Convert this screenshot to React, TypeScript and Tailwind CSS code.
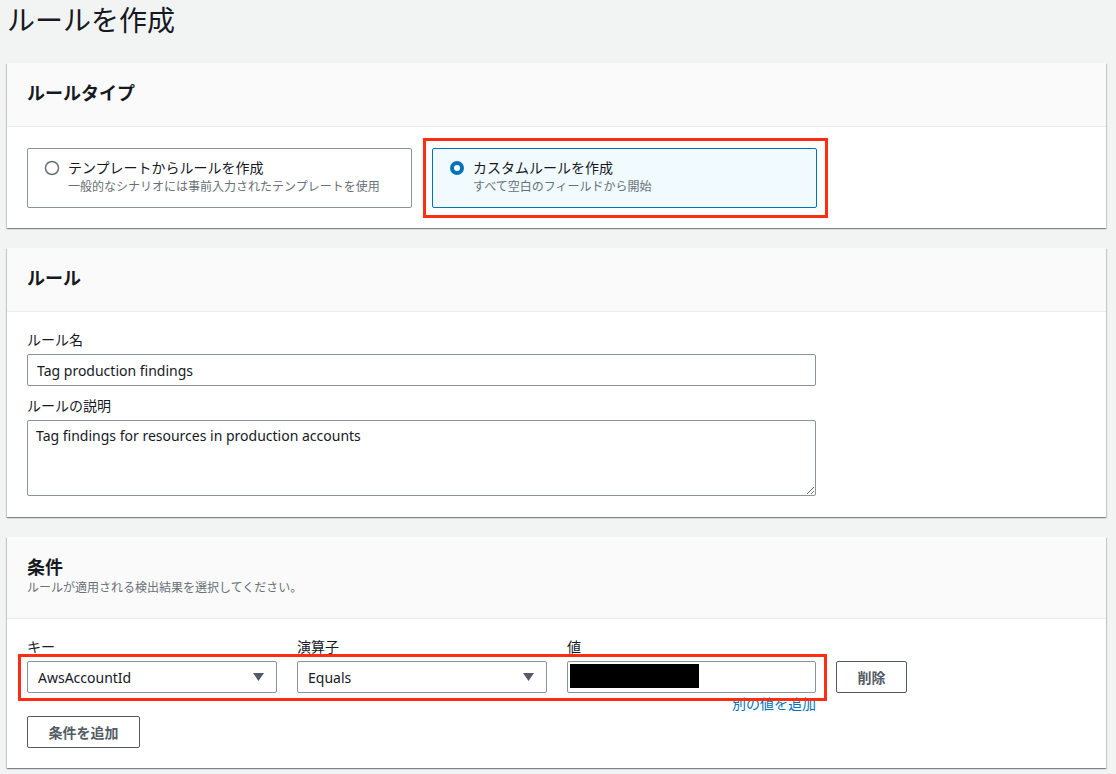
import React from 'react';

const font = "font-['Noto_Sans','Noto_Sans_CJK_JP',sans-serif]";

function Card({ children }: { children: React.ReactNode }) {
  return (
    <section className="bg-white shadow-[0_1px_1px_0_rgba(0,28,36,0.3),1px_1px_1px_0_rgba(0,28,36,0.15),-1px_1px_1px_0_rgba(0,28,36,0.15)]">
      {children}
    </section>
  );
}

function CardHeader({ title, sub }: { title: string; sub?: string }) {
  return (
    <div className="bg-[#fafafa] border-b border-[#eaeded] px-5 pt-[18px] pb-[21px]">
      <h2 className="text-[18px] leading-6 font-bold text-[#16191f]">{title}</h2>
      {sub && <p className="text-[12px] leading-[18px] text-[#687078]">{sub}</p>}
    </div>
  );
}

function Radio({ checked }: { checked?: boolean }) {
  return (
    <svg width="16" height="16" viewBox="0 0 16 16" className="shrink-0 mt-[2px]">
      {checked ? (
        <>
          <circle cx="8" cy="8" r="7" fill="#0073bb" />
          <circle cx="8" cy="8" r="3" fill="#fff" />
        </>
      ) : (
        <circle cx="8" cy="8" r="6.5" fill="#fff" stroke="#687078" strokeWidth="1.5" />
      )}
    </svg>
  );
}

function Tile({ title, desc, checked }: { title: string; desc: string; checked?: boolean }) {
  return (
    <div
      className={
        'w-[385px] h-[60px] rounded-[2px] border pl-4 pt-[9px] flex gap-2 ' +
        (checked ? 'border-[#0073bb] bg-[#f1faff]' : 'border-[#879596] bg-white')
      }
    >
      <Radio checked={checked} />
      <div>
        <div className="text-[14px] leading-5 text-[#16191f]">{title}</div>
        <div className="text-[12px] leading-[18px] text-[#687078]">{desc}</div>
      </div>
    </div>
  );
}

function Caret() {
  return (
    <svg width="11" height="8" viewBox="0 0 11 8">
      <path d="M0 0 L11 0 L5.5 8 Z" fill="#545b64" />
    </svg>
  );
}

function Select({ value }: { value: string }) {
  return (
    <div className="h-[32px] rounded-[2px] border border-[#879596] bg-white flex items-center justify-between pl-[10px] pr-[12px] text-[14px] text-[#16191f]">
      <span>{value}</span>
      <Caret />
    </div>
  );
}

function Label({ children }: { children: React.ReactNode }) {
  return <div className="text-[14px] leading-[22px] text-[#16191f] mb-[3px]">{children}</div>;
}

function Button({ children, className = '' }: { children: React.ReactNode; className?: string }) {
  return (
    <button
      className={
        'h-[32px] rounded-[2px] border border-[#545b64] bg-white text-[14px] font-bold text-[#545b64] ' + className
      }
    >
      {children}
    </button>
  );
}

export default function App() {
  return (
    <div className={`${font} min-h-screen bg-[#f2f3f3] pl-[7px] pr-[10px] pb-2`}>
      <h1 className="text-[28px] leading-[40px] text-[#16191f] mb-[23px]">ルールを作成</h1>

      <div className="flex flex-col gap-5">
        <Card>
          <CardHeader title="ルールタイプ" />
          <div className="px-5 pt-[21px] pb-5 flex gap-5">
            <Tile title="テンプレートからルールを作成" desc="一般的なシナリオには事前入力されたテンプレートを使用" />
            <div className="relative">
              <Tile title="カスタムルールを作成" desc="すべて空白のフィールドから開始" checked />
              <div className="absolute -top-[10px] -bottom-[10px] -left-[9px] -right-[11px] border-[3px] border-[#ff2e12] pointer-events-none" />
            </div>
          </div>
        </Card>

        <Card>
          <CardHeader title="ルール" />
          <div className="px-5 pt-[17px] pb-[21px] w-[829px]">
            <Label>ルール名</Label>
            <div className="h-[32px] rounded-[2px] border border-[#879596] flex items-center px-[9px] text-[14px] text-[#16191f]">
              Tag production findings
            </div>
            <div className="mt-[9px]">
              <Label>ルールの説明</Label>
            </div>
            <textarea
              readOnly
              defaultValue="Tag findings for resources in production accounts"
              className="block w-full h-[76px] mt-[2px] rounded-[2px] border border-[#879596] px-2 py-[4px] text-[14px] leading-[22px] text-[#16191f] outline-none"
            />
          </div>
        </Card>

        <Card>
          <CardHeader title="条件" sub="ルールが適用される検出結果を選択してください。" />
          <div className="px-5 pt-[17px] pb-5">
            <div className="flex gap-5 items-start">
              <div className="relative flex gap-5">
                <div className="w-[250px]">
                  <Label>キー</Label>
                  <Select value="AwsAccountId" />
                </div>
                <div className="w-[250px]">
                  <Label>演算子</Label>
                  <Select value="Equals" />
                </div>
                <div className="w-[249px]">
                  <Label>値</Label>
                  <div className="h-[32px] rounded-[2px] border border-[#879596] bg-white p-[2px]">
                    <div className="w-[129px] h-[24px] bg-black" />
                  </div>
                  <div className="text-right text-[14px] leading-[18px] mt-[2px] text-[#0073bb]">別の値を追加</div>
                </div>
                <div className="absolute top-[18px] h-[47px] -left-[9px] -right-[11px] border-[3px] border-[#ff2e12] pointer-events-none" />
              </div>
              <Button className="w-[71px] mt-[25px]">削除</Button>
            </div>
            <Button className="w-[113px] mt-[3px]">条件を追加</Button>
          </div>
        </Card>
      </div>
    </div>
  );
}
